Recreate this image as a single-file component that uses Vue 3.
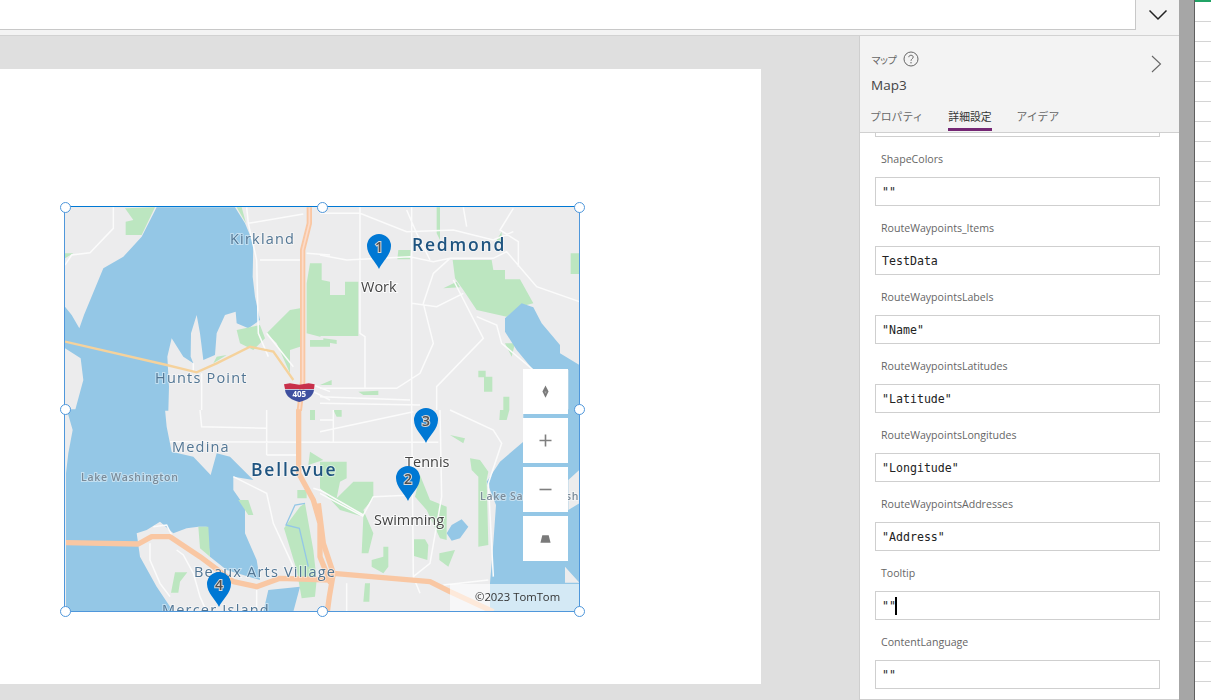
<script setup>
// property list on the right
const fields = [
  { label: "ShapeColors", value: '""' },
  { label: "RouteWaypoints_Items", value: "TestData" },
  { label: "RouteWaypointsLabels", value: '"Name"' },
  { label: "RouteWaypointsLatitudes", value: '"Latitude"' },
  { label: "RouteWaypointsLongitudes", value: '"Longitude"' },
  { label: "RouteWaypointsAddresses", value: '"Address"' },
  { label: "Tooltip", value: '""', caret: true },
  { label: "ContentLanguage", value: '""' },
];

const handles = [
  [0, 0], [50, 0], [100, 0],
  [0, 50], [100, 50],
  [0, 100], [50, 100], [100, 100],
];

const pins = [
  { n: 1, x: 379, y: 269 },
  { n: 3, x: 426, y: 443 },
  { n: 2, x: 408, y: 501 },
  { n: 4, x: 219, y: 607 },
];

const places = [
  { t: "Kirkland", x: 230, y: 244, c: "place" },
  { t: "Hunts Point", x: 155, y: 383, c: "place" },
  { t: "Medina", x: 172, y: 452, c: "place" },
  { t: "Beaux Arts Village", x: 194, y: 577, c: "place" },
  { t: "Mercer Island", x: 162, y: 615, c: "place" },
  { t: "Redmond", x: 412, y: 251, c: "city" },
  { t: "Bellevue", x: 251, y: 476, c: "city" },
  { t: "Lake Washington", x: 81, y: 481, c: "lake" },
  { t: "Lake Sammamish", x: 480, y: 500, c: "lake" },
  { t: "Work", x: 361, y: 292, c: "poi" },
  { t: "Tennis", x: 405, y: 467, c: "poi" },
  { t: "Swimming", x: 374, y: 525, c: "poi" },
];

const sheetRows = 35;
</script>

<template>
  <div class="app">
    <div class="main">
      <div class="topbar">
        <div class="formula"></div>
        <div class="drop">
          <svg width="20" height="12" viewBox="0 0 20 12"><path d="M1.5 1.5 L10 10 L18.5 1.5" fill="none" stroke="#222" stroke-width="1.5" /></svg>
        </div>
      </div>

      <div class="work">
        <div class="stage">
          <div class="canvas">
            <div class="map">
              <svg class="geo" width="514" height="404" viewBox="65 207 514 404">
                <rect x="65" y="207" width="515" height="404" fill="#ececed" />

                <!-- NW part -->
                <g transform="translate(60,200) scale(0.33333)">
                  <path class="water" d="M290,22 L525,22 L555,70 L580,130 L578,230 L585,290 L600,360 L565,385 L530,370 L527,335 L495,345 L470,400 L465,465 L430,480 L420,400 L410,345 L393,400 L392,470 L400,490 L370,470 L335,415 L322,470 L327,560 L325,632 L45,632 L70,540 L62,475 L15,445 L15,320 L35,345 L58,385 L72,345 L130,205 L190,170 L245,110 Z" />
                  <path class="green" d="M195,25 L285,22 L245,105 L197,105 L197,65 L220,60 Z M15,160 L40,160 L15,175 Z M530,22 L545,22 L558,70 Z M530,390 L600,375 L615,415 L580,450 L540,430 Z M750,190 L785,190 L785,240 L810,245 L810,390 L780,410 L740,400 L740,250 Z M690,330 L720,325 L720,440 L690,450 L690,520 L650,430 L620,400 Z M470,470 L500,465 L460,490 Z M750,420 L810,420 L810,440 L750,440 Z" />
                  <path class="road" d="M160,22 L160,85 L90,158 L35,165 L15,195 M560,22 L565,70 L590,180 L595,400 L625,470 M565,70 L730,42 M600,180 L720,180 M740,160 L810,165 M425,520 L425,630 M620,400 L700,500 M400,490 L400,515 M760,555 L810,575 M760,575 L810,600" />
                  <path class="yellow" d="M15,425 L320,495 L410,517 L470,490 L570,440 L640,455 L700,540" />
                  <path class="hwy" d="M748,22 L748,70 L728,150 L728,545 L718,632" />
                  <path class="hwy-in" d="M748,22 L748,70 L728,150 L728,545 L718,632" />
                  <path d="M672,553 L690,550 L718,554 L746,550 L764,553 L762,567 L675,567 Z" fill="#c8304a" />
                  <path d="M675,569 L762,569 C760,590 740,600 718,606 C696,600 677,590 675,569 Z" fill="#3e4f9f" />
                  <text x="718" y="592" class="shield">405</text>
                </g>

                <!-- NE part -->
                <g transform="translate(320,200) scale(0.33333)">
                  <path class="green" d="M0,285 L75,285 L75,245 L115,245 L115,408 L0,408 Z M235,150 L272,150 L270,178 L232,178 Z M370,265 L410,245 L420,262 Z M398,180 L515,180 L520,210 L555,210 L555,238 L600,238 L640,310 L600,320 L560,350 L470,330 L430,270 L405,235 Z M752,160 L778,160 L778,222 L752,222 Z M475,512 L497,512 L497,530 L517,530 L517,575 L492,575 L492,532 L475,532 Z M10,415 L50,420 L50,432 L10,425 Z M0,555 L35,540 L35,555 Z M115,575 L175,572 L175,585 L130,585 Z M550,590 L568,590 L568,630 L550,630 Z M350,22 L360,22 L360,120 L350,100 Z M530,120 L545,95 L545,130 Z M555,430 L585,430 L575,470 Z" />
                  <path class="water" d="M605,310 L640,322 L665,370 L720,435 L720,460 L778,495 L778,632 L745,632 L745,510 L640,510 L590,450 L555,395 L555,355 Z" />
                  <path class="road" d="M0,40 L120,40 L260,95 L400,90 L520,120 L580,95 M120,22 L120,400 L135,410 L135,565 M275,22 L275,630 M0,165 L80,180 L270,170 L340,185 L390,175 L520,175 L560,155 L650,260 L778,305 M390,175 L340,220 L310,310 L340,430 L300,520 L230,565 L0,565 M275,310 L350,320 L430,280 M400,240 L490,415 L350,560 L350,630 M470,350 L530,375 L545,430 L640,510 M260,30 L290,100 L330,180 M430,22 L440,80 M580,25 L540,90 L595,125 L595,200 M0,590 L270,600 M0,610 L300,615" />
                </g>

                <!-- SW part -->
                <g transform="translate(60,410) scale(0.33333)">
                  <path class="water" d="M20,-2 L315,-2 L320,50 L335,125 L400,140 L452,195 L470,130 L510,140 L580,210 L520,200 L520,240 L555,290 L555,370 L590,450 L600,510 L500,480 L450,440 L440,350 L415,350 L380,355 L340,370 L300,335 L260,360 L230,370 L240,440 L290,530 L340,605 L18,605 L18,190 L25,130 L38,60 Z M610,605 L625,540 L720,530 L700,605 Z" />
                  <path class="green" d="M535,270 L565,270 L580,315 L565,315 Z M415,350 L445,350 L450,440 L420,415 Z M345,487 L382,487 L360,515 L355,548 L333,548 Z M672,355 L720,290 L735,280 L760,420 L770,510 L765,560 L725,565 L710,480 Z M712,240 L740,240 L740,265 L712,265 Z M750,0 L765,0 L765,30 L750,30 Z M750,125 L790,150 L745,165 Z" />
                  <path d="M735,280 L705,285 L678,345 L718,355 L745,470" fill="none" stroke="#94c7e6" stroke-width="4" />
                  <path class="road" d="M420,0 L425,50 L620,55 M620,0 L620,135 M330,95 L810,97 M620,135 L710,135 M520,200 L620,250 L640,340 L700,470 M270,400 L270,450 L300,520 L330,560 M350,420 L370,435 L400,490 L420,560 L440,605 M590,540 L590,605 M760,235 L810,250 M280,350 L320,345 L335,375" />
                  <path class="hwy" d="M18,398 L235,402 L275,380 L330,380 L420,440 L520,515 L590,530 L660,505 L815,510" />
                  <path class="hwy" d="M716,-2 L716,190 L760,270 L780,340 L780,440 L812,520" />
                </g>

                <!-- SE part -->
                <g transform="translate(320,410) scale(0.33333)">
                  <path class="water" d="M778,-2 L610,-2 L610,95 L540,155 L500,215 L528,285 L520,400 L510,520 L510,605 L778,605 Z M425,328 L445,350 L420,385 L395,392 L380,370 L395,345 Z" />
                  <path class="land" d="M735,470 L778,518 L735,518 Z M745,210 L778,180 L778,280 L745,300 Z" />
                  <path class="green" d="M0,155 L80,155 L80,205 L60,215 L50,265 L100,215 L160,215 L160,265 L130,300 L160,370 L145,430 L125,430 L130,320 L60,300 L0,235 Z M300,195 L330,270 L380,290 L380,390 L360,385 L320,300 L285,260 Z M450,145 L480,150 L505,185 L500,210 L505,405 L475,410 L475,200 L455,180 Z M282,388 L315,388 L325,405 L322,450 L282,438 Z M358,430 L405,420 L385,470 L358,450 Z M155,450 L190,440 L190,410 L205,410 L205,470 L190,490 L155,470 Z M390,75 L435,85 L430,100 Z M135,520 L150,520 L148,575 L130,575 Z M540,0 L568,0 L560,30 L538,30 Z M40,0 L65,0 L65,20 L50,20 Z" />
                  <path class="road" d="M0,30 L40,30 M40,0 L40,95 M0,97 L355,97 M275,0 L280,500 L300,550 M360,0 L365,260 L330,460 L280,500 M0,65 L280,5 M390,0 L520,60 L545,100 L505,220 L520,500 M160,260 L280,255 M0,240 L130,315 L160,260 M0,250 L130,320 M80,520 L80,605 M370,525 L505,510" />
                  <path class="hwy" d="M-5,280 L10,400 L40,490 L330,515 L390,545 L520,605" />
                  <path class="hwy" d="M40,490 L28,560 L22,605" />
                </g>

                <text v-for="p in places" :key="p.t" :x="p.x" :y="p.y" :class="p.c">{{ p.t }}</text>

                <g v-for="p in pins" :key="p.n" :transform="`translate(${p.x},${p.y})`">
                  <path d="M0,0 C-3,-7 -12,-14 -12,-23 A12,12 0 0 1 12,-23 C12,-14 3,-7 0,0 Z" fill="#0078d4" />
                  <text x="0" y="-17" class="digit">{{ p.n }}</text>
                </g>

                <rect x="450" y="584" width="130" height="27" fill="#fff" fill-opacity="0.6" />
                <text x="475" y="601" class="copy">©2023 TomTom</text>
              </svg>

              <div class="controls">
                <div class="ctl">
                  <svg width="7" height="13" viewBox="0 0 8 14"><path d="M4 0 L7.5 7 L4 14 L0.5 7 Z" fill="#7a7a7a" /><path d="M2.6 7 L5.4 7 L4 9.5 Z" fill="#a8a8a8" /></svg>
                </div>
                <div class="ctl">
                  <svg width="13" height="13" viewBox="0 0 13 13"><path d="M6.5 0.5 V12.5 M0.5 6.5 H12.5" stroke="#7f7f7f" stroke-width="1.6" /></svg>
                </div>
                <div class="ctl">
                  <svg width="13" height="3" viewBox="0 0 13 3"><path d="M0.5 1.5 H12.5" stroke="#7f7f7f" stroke-width="1.6" /></svg>
                </div>
                <div class="ctl">
                  <svg width="11" height="8" viewBox="0 0 12 8"><path d="M2.5 0 H9.5 L11.5 8 H0.5 Z" fill="#7a7a7a" /></svg>
                </div>
              </div>

              <i v-for="(h, i) in handles" :key="i" class="handle" :style="{ left: h[0] + '%', top: h[1] + '%' }"></i>
            </div>
          </div>
        </div>

        <div class="panel">
          <div class="phead">
            <div class="ptitle">
              <span class="pkind">マップ</span>
              <svg width="16" height="16" viewBox="0 0 16 16">
                <circle cx="8" cy="8" r="7" fill="none" stroke="#666" />
                <path d="M5.8 6.2 C5.8 3.6 10.2 3.6 10.2 6.1 C10.2 7.8 8 7.8 8 9.8" fill="none" stroke="#666" />
                <circle cx="8" cy="11.8" r="0.7" fill="#666" />
              </svg>
            </div>
            <div class="pname">Map3</div>
            <svg class="pclose" width="11" height="18" viewBox="0 0 11 18"><path d="M1 1 L9.5 9 L1 17" fill="none" stroke="#666" stroke-width="1.1" /></svg>
            <div class="tabs">
              <span class="tab">プロパティ</span>
              <span class="tab on">詳細設定</span>
              <span class="tab">アイデア</span>
            </div>
          </div>
          <div class="pbody">
            <div class="cut"></div>
            <div v-for="f in fields" :key="f.label" class="field">
              <div class="flabel">{{ f.label }}</div>
              <div class="fbox">{{ f.value }}<i v-if="f.caret" class="caret"></i></div>
            </div>
          </div>
        </div>
      </div>
    </div>

    <div class="scroll"></div>

    <div class="sheet">
      <div class="sheet-top"></div>
      <div v-for="r in sheetRows" :key="r" class="sheet-row"></div>
    </div>
  </div>
</template>

<style>
html, body { margin: 0; overflow: hidden; }
</style>

<style scoped>
.app {
  display: flex;
  width: 1211px;
  height: 700px;
  overflow: hidden;
  background: #fff;
  font-family: "Open Sans", "Noto Sans CJK JP", sans-serif;
}
.main {
  width: 1179px;
  display: flex;
  flex-direction: column;
}
.topbar {
  height: 36px;
  flex: none;
  box-sizing: border-box;
  display: flex;
  background: #f3f3f3;
  border-bottom: 1px solid #d2d2d2;
}
.formula {
  width: 1136px;
  height: 30px;
  box-sizing: border-box;
  background: #fff;
  border-right: 1px solid #c8c8c8;
  border-bottom: 1px solid #c8c8c8;
}
.drop {
  flex: 1;
  display: flex;
  justify-content: center;
  padding-top: 9px;
  height: 12px;
}
.work {
  flex: 1;
  display: flex;
  min-height: 0;
}
.stage {
  width: 859px;
  background: #dfdfdf;
  padding-top: 33px;
  box-sizing: border-box;
}
.canvas {
  width: 761px;
  height: 615px;
  background: #fff;
  padding: 137px 0 0 64px;
  box-sizing: border-box;
}
.map {
  position: relative;
  width: 516px;
  height: 406px;
  box-sizing: border-box;
  border: 1px solid #4f97db;
  border-top: 1px solid #0078d4;
}
.geo {
  display: block;
  filter: blur(0.45px);
}
.water { fill: #94c7e6; }
.land { fill: #ececed; }
.green { fill: #bce6c0; }
.road { fill: none; stroke: #fbfbfb; stroke-width: 4.5; }
.yellow { fill: none; stroke: #f5d29c; stroke-width: 7; }
.hwy { fill: none; stroke: #f9c7a3; stroke-width: 16; stroke-linejoin: round; }
.hwy-in { fill: none; stroke: #fcdccb; stroke-width: 5; }
.shield {
  font: 700 24px "Open Sans", sans-serif;
  fill: #fff;
  text-anchor: middle;
}
.place, .city, .lake, .poi {
  paint-order: stroke;
  stroke: #fff;
  stroke-opacity: 0.45;
  stroke-width: 2px;
  font-family: "Open Sans", sans-serif;
}
.place { font-size: 14.5px; fill: #527694; letter-spacing: 1.2px; }
.city { font-size: 17.5px; font-weight: 600; fill: #1f5480; letter-spacing: 1.8px; }
.lake { font-size: 10.5px; font-weight: 600; fill: #7b8b99; letter-spacing: 0.7px; }
.poi { font-size: 14.5px; fill: #444; stroke-opacity: 0.8; }
.digit {
  font: 600 14px "Open Sans", sans-serif;
  fill: #505050;
  text-anchor: middle;
  paint-order: stroke;
  stroke: #d8d8d8;
  stroke-width: 2px;
}
.copy { font: 11.3px "Open Sans", sans-serif; fill: #333; }
.controls {
  position: absolute;
  left: 458px;
  top: 162px;
  display: flex;
  flex-direction: column;
  gap: 4px;
}
.ctl {
  width: 45px;
  height: 45px;
  background: #fff;
  display: flex;
  align-items: center;
  justify-content: center;
}
.handle {
  position: absolute;
  width: 11px;
  height: 11px;
  box-sizing: border-box;
  margin: -5.5px 0 0 -5.5px;
  border: 1px solid #4f97db;
  border-radius: 50%;
  background: #fff;
}
.panel {
  width: 320px;
  box-sizing: border-box;
  display: flex;
  flex-direction: column;
  border-left: 1px solid #cfcfcf;
  border-bottom: 1px solid #cfcfcf;
  background: #fff;
  height: 664px;
}
.phead {
  position: relative;
  height: 97px;
  flex: none;
  box-sizing: border-box;
  background: #f3f3f3;
  border-bottom: 1px solid #d0d0d0;
  padding: 15px 0 0 11px;
}
.ptitle {
  display: flex;
  align-items: center;
  gap: 8px;
  font-size: 10px;
  color: #666;
  height: 16px;
}
.pkind {
  font-size: 10px;
  letter-spacing: -2px;
}
.pname {
  margin-top: 8px;
  font-size: 13.5px;
  line-height: 20px;
  color: #444;
}
.pclose {
  position: absolute;
  right: 17px;
  top: 19px;
}
.tabs {
  display: flex;
  gap: 25px;
  margin: 13px 0 0 -1px;
  font-size: 10.8px;
  color: #666;
}
.tab {
  height: 23px;
  box-sizing: border-box;
  line-height: 17px;
  white-space: nowrap;
}
.tab.on {
  color: #333;
  border-bottom: 3px solid #742774;
}
.pbody {
  flex: 1;
  overflow: hidden;
  padding-left: 15px;
}
.cut {
  width: 285px;
  height: 4px;
  box-sizing: border-box;
  border: 1px solid #cfcfcf;
  border-top: none;
}
.field { width: 285px; }
.flabel {
  height: 16px;
  padding: 14px 0 10px 6px;
  font-size: 10.6px;
  line-height: 16px;
  color: #666;
}
.fbox {
  position: relative;
  height: 29px;
  box-sizing: border-box;
  border: 1px solid #cfcfcf;
  padding-left: 6px;
  font: 11.6px/28px "DejaVu Sans Mono", monospace;
  color: #222;
}
.caret {
  position: absolute;
  left: 19px;
  top: 5px;
  width: 2px;
  height: 18px;
  background: #000;
}
.scroll {
  width: 16px;
  flex: none;
  box-sizing: border-box;
  background: #a6a6a6;
  border-right: 1px solid #5f5f5f;
}
.sheet { flex: 1; }
.sheet-top {
  height: 2px;
  background: #21a366;
  margin-bottom: 19px;
}
.sheet-row {
  height: 20px;
  box-sizing: border-box;
  border-top: 1px solid #d4d4d4;
}
</style>
